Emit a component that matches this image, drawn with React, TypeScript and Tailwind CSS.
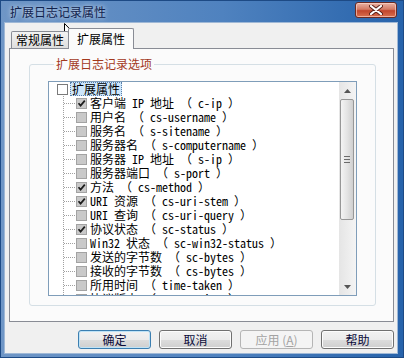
import React from "react";

const rows: { label: string; checked: boolean }[] = [
  { label: "客户端 IP 地址 （ c-ip ）", checked: true },
  { label: "用户名 （ cs-username ）", checked: false },
  { label: "服务名 （ s-sitename ）", checked: false },
  { label: "服务器名 （ s-computername ）", checked: false },
  { label: "服务器 IP 地址 （ s-ip ）", checked: false },
  { label: "服务器端口 （ s-port ）", checked: false },
  { label: "方法 （ cs-method ）", checked: true },
  { label: "URI 资源 （ cs-uri-stem ）", checked: true },
  { label: "URI 查询 （ cs-uri-query ）", checked: false },
  { label: "协议状态 （ sc-status ）", checked: true },
  { label: "Win32 状态 （ sc-win32-status ）", checked: false },
  { label: "发送的字节数 （ sc-bytes ）", checked: false },
  { label: "接收的字节数 （ cs-bytes ）", checked: false },
  { label: "所用时间 （ time-taken ）", checked: false },
  { label: "协议版本 （ cs-version ）", checked: false },
];

const CJK = "font-['Noto_Sans_CJK_SC','Noto_Sans',sans-serif]";
const MONO = "font-['Noto_Sans_Mono_CJK_SC','Noto_Sans_CJK_SC','Liberation_Mono',monospace]";

function Check() {
  return (
    <svg width="9" height="9" viewBox="0 0 9 9" className="block">
      <path d="M1.5 4.2 L3.6 6.6 L7.8 1.6" fill="none" stroke="#1c1c1c" strokeWidth="1.7" />
    </svg>
  );
}

function TreeLines() {
  return (
    <svg width="27" height="14" className="block shrink-0">
      <line x1="14.5" y1="0" x2="14.5" y2="14" stroke="#a0a0a0" strokeDasharray="1 1" />
      <line x1="15" y1="7.5" x2="27" y2="7.5" stroke="#a0a0a0" strokeDasharray="1 1" />
    </svg>
  );
}

function Btn({ children, kind }: { children: React.ReactNode; kind?: "default" | "disabled" }) {
  const base = `w-[73px] h-[19px] rounded-[3px] border flex items-center justify-center text-[12px] leading-[14px] ${CJK}`;
  if (kind === "default")
    return (
      <div className={`${base} border-[#3c7fb1] bg-[linear-gradient(#f2f2f2,#ebebeb_50%,#dddddd_50%,#cfcfcf)] shadow-[inset_0_0_0_1px_#bfe3f7] text-[#0c0c3a]`}>
        {children}
      </div>
    );
  if (kind === "disabled")
    return (
      <div className={`${base} border-[#b5b5b5] bg-[#f4f4f4] text-[#a3a3a3]`}>{children}</div>
    );
  return (
    <div className={`${base} border-[#707070] bg-[linear-gradient(#f2f2f2,#ebebeb_50%,#dddddd_50%,#cfcfcf)] shadow-[inset_0_0_0_1px_#fcfcfc] text-[#0c0c3a]`}>
      {children}
    </div>
  );
}

export default function App() {
  return (
    <div className="relative w-[404px] h-[358px] overflow-hidden flex flex-col border border-[#1d4a85] bg-[linear-gradient(90deg,#6f96c6,#4f82bf_55%,#2763ab)]">
      {/* title bar */}
      <div className="h-[21px] flex items-start justify-between pl-[9px] pr-[6px] shrink-0">
        <span className={`mt-[4px] text-[12px] leading-[14px] text-[#10224d] ${CJK} [text-shadow:0_0_5px_rgba(255,255,255,0.9)]`}>
          扩展日志记录属性
        </span>
        <div className="mt-[1px] w-[42px] h-[16px] rounded-[3px] border border-[#6b2a22] bg-[linear-gradient(#eab2a4,#d47a64_45%,#c2452c_55%,#d9704f)] flex items-center justify-center shadow-[inset_0_0_0_1px_rgba(255,220,210,0.6)]">
          <svg width="14" height="10" viewBox="0 0 14 10">
            <path d="M2 1 L12 9 M12 1 L2 9" stroke="#5a2018" strokeWidth="4" strokeLinecap="round" />
            <path d="M2 1 L12 9 M12 1 L2 9" stroke="#ffffff" strokeWidth="2.2" strokeLinecap="round" />
          </svg>
        </div>
      </div>

      {/* client area */}
      <div className="flex-1 ml-[3px] mr-[5px] mb-[3px] bg-[#f0f0f0] border border-[#9fb8d6] flex flex-col">
        {/* tabs */}
        <div className="pt-[4px] pl-[6px] flex items-end h-[26px] -mb-[1px] shrink-0 relative z-10">
          <div className={`mb-[1px] w-[58px] h-[17px] rounded-t-[2px] border border-b-0 border-[#898c95] bg-[linear-gradient(#f3f3f3,#dedede)] flex items-center justify-center text-[12px] leading-[14px] text-black ${CJK}`}>
            常规属性
          </div>
          <div className={`-ml-[1px] w-[66px] h-[21px] rounded-t-[2px] border border-b-0 border-[#898c95] bg-[#fbfbfb] flex items-start justify-center pt-[3px] text-[12px] leading-[14px] text-black ${CJK}`}>
            扩展属性
          </div>
        </div>

        {/* panel */}
        <div className="ml-[4px] mr-[3px] h-[274px] border border-[#898c95] bg-[#fbfbfb] flex flex-col shrink-0">
          <fieldset className="mt-[8px] ml-[19px] mr-[17px] h-[249px] rounded-[3px] border border-[#d5dfe5] pt-[10px] px-[18px] min-w-0">
            <legend className={`ml-[6px] px-[2px] text-[12px] leading-[14px] text-[#a3391d] ${CJK}`}>扩展日志记录选项</legend>
            <div className="h-[215px] border border-[#7f9db9] bg-white flex">
              {/* tree */}
              <div className={`flex-1 overflow-hidden text-[12px] leading-[14px] text-black ${MONO}`}>
                <div className="h-[14px] flex items-center pl-[8px]">
                  <span className="w-[11px] h-[11px] border border-[#7a7a7a] bg-white shrink-0" />
                  <span className={`ml-[2px] px-[2px] h-[14px] bg-[#cde6fb] outline-1 outline-dotted outline-[#5a7fa8] -outline-offset-1 ${CJK} leading-[14px]`}>
                    扩展属性
                  </span>
                </div>
                {rows.map((r) => (
                  <div key={r.label} className="h-[14px] flex items-center">
                    <TreeLines />
                    <span className="w-[11px] h-[11px] border border-[#a3a3a3] bg-[#c9c9c9] shrink-0 flex items-center justify-center">
                      {r.checked && <Check />}
                    </span>
                    <span className="ml-[3px] whitespace-pre">{r.label}</span>
                  </div>
                ))}
              </div>
              {/* scrollbar */}
              <div className="w-[17px] flex flex-col bg-[linear-gradient(90deg,#e5e5e5,#f4f4f4)] shrink-0">
                <div className="h-[17px] flex items-center justify-center">
                  <svg width="7" height="4" viewBox="0 0 7 4">
                    <path d="M0 4 L3.5 0 L7 4 Z" fill="#555" />
                  </svg>
                </div>
                <div className="ml-[1px] mr-[2px] h-[121px] rounded-[2px] border border-[#979797] bg-[linear-gradient(90deg,#f4f4f4,#e2e2e2_55%,#cfcfcf)] flex flex-col items-center justify-center gap-[2px]">
                  <span className="w-[6px] h-px bg-[#6b6b6b]" />
                  <span className="w-[6px] h-px bg-[#6b6b6b]" />
                  <span className="w-[6px] h-px bg-[#6b6b6b]" />
                </div>
                <div className="flex-1" />
                <div className="h-[17px] flex items-center justify-center">
                  <svg width="7" height="4" viewBox="0 0 7 4">
                    <path d="M0 0 L3.5 4 L7 0 Z" fill="#555" />
                  </svg>
                </div>
              </div>
            </div>
          </fieldset>
        </div>

        {/* buttons */}
        <div className="mt-[8px] pr-[3px] flex justify-end gap-[8px]">
          <Btn kind="default">确定</Btn>
          <Btn>取消</Btn>
          <Btn kind="disabled">
            应用 (<span className="underline">A</span>)
          </Btn>
          <Btn>帮助</Btn>
        </div>
      </div>

      {/* mouse cursor */}
      <svg width="13" height="20" viewBox="0 0 13 20" className="absolute left-[63px] top-[22px]">
        <path d="M0.5 0.5 L0.5 15.5 L4 12.2 L6.6 18.2 L8.8 17.2 L6.3 11.4 L11 11.4 Z" fill="#fff" stroke="#000" strokeWidth="1" />
      </svg>
    </div>
  );
}
